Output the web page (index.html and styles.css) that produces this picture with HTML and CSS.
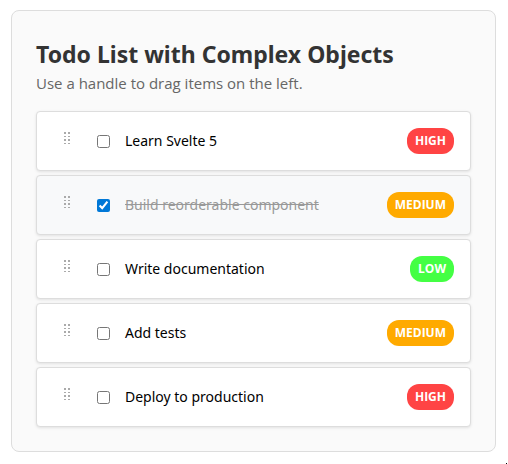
FILE: index.html
```html
<!DOCTYPE html>
<html lang="en">
<head>
<meta charset="utf-8">
<meta name="viewport" content="width=device-width, initial-scale=1">
<title>Todo List</title>
<link rel="stylesheet" href="styles.css">
</head>
<body>
<svg class="sprite" aria-hidden="true">
  <symbol id="grip" viewBox="0 0 6 12">
    <path d="M0 0h2v2h-2zM4 0h2v2h-2zM0 4h2v1h-2zM4 4h2v1h-2zM0 7h2v2h-2zM4 7h2v2h-2zM0 11h2v1h-2zM4 11h2v1h-2z"/>
  </symbol>
</svg>
<main class="card">
  <h1 class="title">Todo List with Complex Objects</h1>
  <p class="subtitle">Use a handle to drag items on the left.</p>
  <ul class="list">
    <li class="item">
      <button class="handle" type="button" aria-label="Drag"><svg class="grip"><use href="#grip"/></svg></button>
      <label class="todo"><input class="check" type="checkbox"><span class="text">Learn Svelte 5</span></label>
      <span class="badge high">HIGH</span>
    </li>
    <li class="item done">
      <button class="handle" type="button" aria-label="Drag"><svg class="grip"><use href="#grip"/></svg></button>
      <label class="todo"><input class="check" type="checkbox" checked><span class="text">Build reorderable component</span></label>
      <span class="badge medium">MEDIUM</span>
    </li>
    <li class="item">
      <button class="handle" type="button" aria-label="Drag"><svg class="grip"><use href="#grip"/></svg></button>
      <label class="todo"><input class="check" type="checkbox"><span class="text">Write documentation</span></label>
      <span class="badge low">LOW</span>
    </li>
    <li class="item">
      <button class="handle" type="button" aria-label="Drag"><svg class="grip"><use href="#grip"/></svg></button>
      <label class="todo"><input class="check" type="checkbox"><span class="text">Add tests</span></label>
      <span class="badge medium">MEDIUM</span>
    </li>
    <li class="item">
      <button class="handle" type="button" aria-label="Drag"><svg class="grip"><use href="#grip"/></svg></button>
      <label class="todo"><input class="check" type="checkbox"><span class="text">Deploy to production</span></label>
      <span class="badge high">HIGH</span>
    </li>
  </ul>
</main>
<div class="corner"></div>
</body>
</html>
```
FILE: styles.css
```css
* {
  box-sizing: border-box;
}

body {
  margin: 0;
  padding: 10px 12px 12px 11px;
  background: #fff;
  color: #000;
  font-family: "Segoe UI", "Open Sans", "Noto Sans", sans-serif;
  font-size: 15px;
}

.sprite {
  display: none;
}

.card {
  padding: 24px;
  border: 1px solid #ddd;
  border-radius: 8px;
  background: #fafafa;
}

.title {
  margin: 3px 0 1px;
  color: #333;
  font-family: "Segoe UI", "Noto Sans", "Open Sans", sans-serif;
  font-size: 23px;
  font-weight: 700;
  line-height: 32px;
}

.subtitle {
  margin: 0 0 16px;
  color: #666;
  font-size: 15px;
  line-height: 24px;
}

.list {
  display: flex;
  flex-direction: column;
  gap: 4px;
  margin: 0;
  padding: 0;
  list-style: none;
}

.item {
  display: flex;
  align-items: center;
  min-height: 60px;
  padding: 0 16px;
  border: 1px solid #ddd;
  border-radius: 4px;
  background: #fff;
  box-shadow: 0 1px 3px rgba(0, 0, 0, 0.1);
}

.handle {
  display: flex;
  align-items: center;
  justify-content: center;
  width: 28px;
  height: 28px;
  margin-bottom: 6px;
  padding: 0;
  border: 0;
  background: none;
  cursor: grab;
}

.grip {
  width: 6px;
  height: 12px;
  fill: #aaa;
}

.todo {
  display: flex;
  flex: 1;
  align-items: center;
  gap: 15px;
  margin-left: 16px;
}

.check {
  width: 13px;
  height: 13px;
  margin: 0;
  accent-color: #0078d7;
}

.text {
  font-family: "Segoe UI", "Noto Sans", "Open Sans", sans-serif;
  font-size: 14px;
  line-height: 24px;
}

.done {
  background: #f8f9fa;
}

.done .text {
  color: #999;
  text-decoration: line-through;
}

.badge {
  padding: 4px 8px;
  border-radius: 12px;
  color: #fff;
  font-size: 12px;
  font-weight: 700;
  line-height: 18px;
}

.high {
  background: #f44;
}

.medium {
  background: #fa0;
}

.low {
  background: #4f4;
}

.corner {
  position: fixed;
  right: 1px;
  bottom: 0;
  width: 1px;
  height: 1px;
  background: #000;
}
```
